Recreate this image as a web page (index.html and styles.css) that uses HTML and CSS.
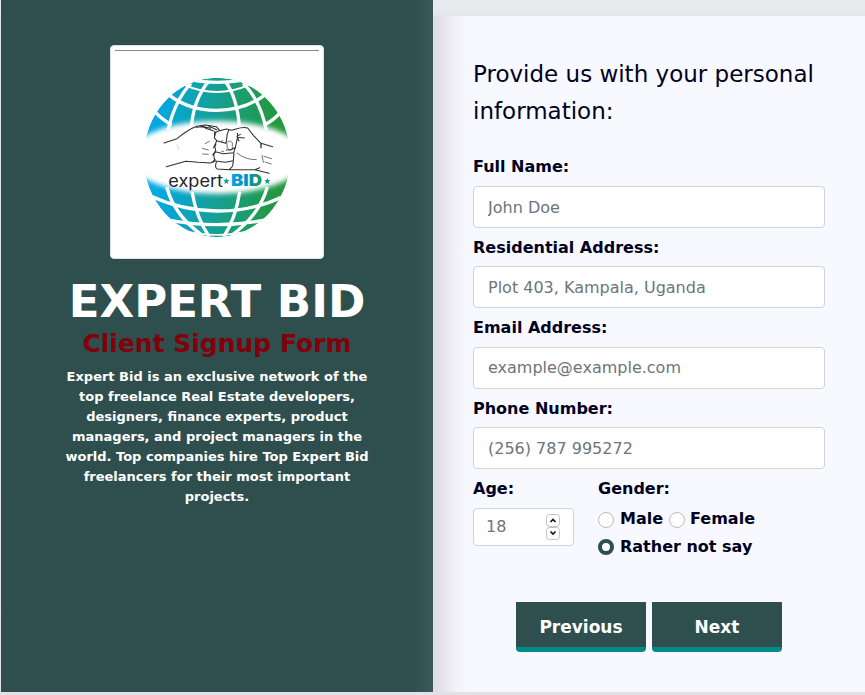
FILE: index.html
```html
<!DOCTYPE html>
<html lang="en">
<head>
<meta charset="utf-8">
<title>Expert Bid</title>
<link rel="stylesheet" href="styles.css">
</head>
<body>
<main class="page">
  <section class="brand">
    <div class="logo">
      <svg viewBox="45 45 612 612" width="204" height="204" role="img" aria-label="Expert Bid">
        <defs>
          <linearGradient id="globe" x1="0" x2="1" y1="0" y2="0"><stop offset="0" stop-color="#00a9f0"/><stop offset=".18" stop-color="#05a6d5"/><stop offset=".5" stop-color="#16a092"/><stop offset=".9" stop-color="#22993f"/><stop offset="1" stop-color="#26993a"/></linearGradient>
          <linearGradient id="bid"><stop offset="0" stop-color="#00a6e6"/><stop offset=".5" stop-color="#078ec0"/><stop offset="1" stop-color="#22994c"/></linearGradient>
          <filter id="soft" x="-20%" y="-20%" width="140%" height="140%"><feGaussianBlur stdDeviation="8"/></filter>
          <clipPath id="ball"><ellipse cx="351" cy="367" rx="220" ry="239"/></clipPath>
        </defs>
        <path d="M45 46.500H657" stroke="#888" stroke-width="3"/>
        <g clip-path="url(#ball)">
          <ellipse cx="351" cy="367" rx="220" ry="239" fill="url(#globe)"/>
          <g fill="none" stroke="#fff" stroke-width="10">
            <path d="M285 137Q350 147 420 137M160 224Q180 250 215 269M543 230Q520 258 490 271M150 482Q245 526 350 528T555 482M195 553Q270 569 350 569T505 553" />
            <path stroke-width="6" d="M250 148Q350 194 450 148"/>
            <path d="M205 178Q265 226 350 226T497 178"/>
            <path d="M326 139Q282 190 274 275M376 139Q412 190 418 275M273 145Q226 193 204 285M429 145Q480 193 499 285M276 470Q290 550 328 606M419 470Q407 550 371 606M200 456Q223 543 310 603M502 456Q477 543 392 603"/>
          </g>
          <path d="M245 587Q350 612 456 587V615H245Z" fill="none" stroke="#fff" stroke-width="5"/>
        </g>
        <ellipse cx="351" cy="367" rx="267" ry="109" fill="#fff" filter="url(#soft)"/>
        <g fill="none" stroke="#302f32" stroke-width="3.200" stroke-linecap="round" stroke-linejoin="round">
          <path d="M192 324L231 311Q264 284 290 274L316 270L349 275L359 286L346 293L343 308L350 317L344 333L347 347L341 357L344 378L331 384L295 382L257 379L199 395"/>
          <path d="M289 277L308 275L323 282L340 287M303 273L331 280M327 274L350 284M359 287L379 282L395 286L408 282Q430 275 443 279L460 301L483 325L518 335M387 284Q379 298 380 315M379 345L392 345L407 337M350 317L377 325L380 316M346 350L370 356L401 353L406 338L412 310M345 378L376 382L400 377L402 354M349 382Q343 398 352 402L388 404L398 393L400 377M387 404L465 404L507 415M465 404L479 398M411 304L421 298M411 307L433 309M412 306L417 318M413 304L412 295"/>
          <path stroke-width="4" d="M344 290V301M347 328L341 338M345 352L339 360M345 374L339 381M483 327V338"/>
          <path stroke-width="2" d="M307 340L325 345M308 357L325 358M315 326L328 319M411 354Q437 375 469 374M486 361L490 382M492 364L515 371M495 381L514 387M364 318H369M365 349H371M380 319L382 338Q386 347 397 342L397 323Q392 315 385 320"/>
          <path stroke="#8ca0c8" stroke-width="1.500" d="M231 330L236 342"/>
        </g>
        <text class="word-light" x="205" y="455" textLength="164" lengthAdjust="spacingAndGlyphs">expert</text>
        <text class="word-bold" x="393" y="454" textLength="93" lengthAdjust="spacingAndGlyphs" fill="url(#bid)">BID</text>
        <path id="star" d="M379 429L381.500 435L388 435.500L383 440L385 447L379 443L373 447L375 440L370 435.500L376.500 435Z" fill="#079f99"/>
        <use href="#star" x="123"/>
      </svg>
    </div>
    <h1>EXPERT BID</h1>
    <h2>Client Signup Form</h2>
    <p>Expert Bid is an exclusive network of the top freelance Real Estate developers, designers, finance experts, product managers, and project managers in the world. Top companies hire Top Expert Bid freelancers for their most important projects.</p>
  </section>
  <form class="details">
    <h3>Provide us with your personal information:</h3>
    <div class="field"><label for="name">Full Name:</label><input id="name" placeholder="John Doe"></div>
    <div class="field"><label for="address">Residential Address:</label><input id="address" placeholder="Plot 403, Kampala, Uganda"></div>
    <div class="field"><label for="email">Email Address:</label><input id="email" placeholder="example@example.com"></div>
    <div class="field"><label for="phone">Phone Number:</label><input id="phone" placeholder="(256) 787 995272"></div>
    <div class="row">
      <div class="age"><label for="age">Age:</label>
        <div class="number"><input id="age" placeholder="18">
          <div class="spin">
            <svg viewBox="0 0 14 13" width="14" height="13"><rect x=".5" y=".5" width="13" height="12" rx="3"/><path d="M4.500 8L7 5.500L9.500 8"/></svg>
            <svg viewBox="0 0 14 13" width="14" height="13"><rect x=".5" y=".5" width="13" height="12" rx="3"/><path d="M4.500 4.500L7 7L9.500 4.500"/></svg>
          </div>
        </div>
      </div>
      <div class="gender"><div class="legend">Gender:</div>
        <div class="options">
          <label><input type="radio" name="gender">Male</label>
          <label><input type="radio" name="gender">Female</label>
          <label><input type="radio" name="gender" checked>Rather not say</label>
        </div>
      </div>
    </div>
    <div class="actions"><button type="button">Previous</button><button type="button">Next</button></div>
  </form>
</main>
</body>
</html>
```
FILE: styles.css
```css
* { box-sizing: border-box; }
body {
  margin: 0;
  background: linear-gradient(#e6eaec, #e6eaec 12px, #e2e5e8 16px, #e2e2e6);
  font: 16px/24px "DejaVu Sans", sans-serif;
  color: #000020;
  height: 695px;
  overflow: hidden;
}
h1, h2, h3, p { margin: 0; }
.page { display: grid; grid-template-columns: 432px 432px; height: 692px; padding-left: 1px; }
.brand {
  padding: 45px 60px 0;
  background: linear-gradient(90deg, #2f4f4f 412px, #3b5b5a 432px);
  color: #fff;
  text-align: center;
  font-weight: bold;
}
.logo { width: 214px; height: 214px; margin: 0 auto; padding: 4px; background: #fff; border: 1px solid #dee2e6; border-radius: 4px; }
.logo svg { display: block; }
.word-light { font: 400 51px Inter, sans-serif; fill: #252326; }
.word-bold { font: 900 48px Inter, sans-serif; }
h1 { font-size: 45px; line-height: 54px; margin: 16px -20px 0; }
h2 { font-size: 25px; line-height: 29px; color: #80000c; margin: 0 -10px 9px; }
.brand p { font-size: 13px; line-height: 20px; }
.details {
  margin-top: 16px;
  padding: 40px 40px 0;
  background: linear-gradient(90deg, #dddde1, #e4e4e9 10px, #f0f0f6 21px, #f6f6fd 32px, #f8f8ff 42px);
}
h3 { font-size: 23px; line-height: 37px; font-weight: normal; margin: 0 -10px 25.450px 0; }
.field { margin-bottom: 7.830px; }
.field label, .age > label, .legend { display: block; font-weight: bold; margin-bottom: 6.600px; }
.field input, .number {
  display: block;
  width: 100%;
  height: 42px;
  padding: 6px 14px;
  border: 1px solid #ced4da;
  border-radius: 4px;
  background: #fff;
  font: inherit;
}
input::placeholder { color: #6c757d; opacity: 1; }
.row { display: flex; gap: 24px; }
.age { width: 101px; }
.number { display: flex; align-items: center; height: 38px; padding: 0 12px; }
.number input { width: 60px; flex: none; border: 0; padding: 0; background: none; font: inherit; }
.spin { display: grid; flex: none; width: 14px; }
.spin svg { display: block; fill: #fff; stroke: #c3c3c3; }
.spin path { fill: none; stroke: #111; stroke-width: 1.6; }
.gender { flex: 1; }
.gender .legend { margin-bottom: 4px; }
.options { display: flex; flex-wrap: wrap; column-gap: 6px; width: 190px; }
.options label { display: flex; align-items: center; height: 28px; font-weight: bold; }
.options label:nth-child(2) input { margin-right: 5px; }
.options input { appearance: none; width: 16px; height: 16px; margin: 2px 6px 0 0; border: 1px solid #bbb; border-radius: 50%; background: #fff; }
.options input:checked { border: 4px solid #2f4f4f; margin-top: 0; }
.actions { display: flex; gap: 6px; margin: 41px 0 0 43px; }
button { width: 130px; height: 50px; border: 0; border-bottom: 5px solid #008b8b; border-radius: 0 0 4px 4px; background: #2f4f4f; color: #fff; font: bold 17px "DejaVu Sans", sans-serif; padding: 5px 0 0; }
```
